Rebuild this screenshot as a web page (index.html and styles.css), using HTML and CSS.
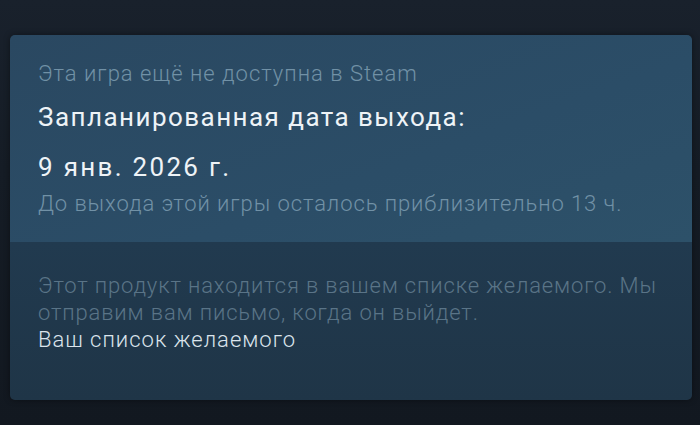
FILE: index.html
```html
<!DOCTYPE html>
<html lang="ru">
<head>
  <meta charset="UTF-8">
  <meta name="viewport" content="width=device-width, initial-scale=1.0">
  <title>Steam — дата выхода</title>
  <link rel="stylesheet" href="styles.css">
</head>
<body>

  <section class="release-card">
    <div class="release-info">
      <p class="muted">Эта игра ещё не доступна в Steam</p>
      <h2 class="release-title">Запланированная дата выхода:</h2>
      <p class="release-date">9 янв. 2026 г.</p>
      <p class="muted countdown">До выхода этой игры осталось приблизительно 13 ч.</p>
    </div>
    <div class="wishlist-info">
      <p class="dim">Этот продукт находится в вашем списке желаемого. Мы<br>отправим вам письмо, когда он выйдет.</p>
      <a class="wishlist-link" href="#">Ваш список желаемого</a>
    </div>
  </section>

</body>
</html>
```

FILE: styles.css
```css
* {
  box-sizing: border-box;
}
html, body {
  height: 100%;
}
body {
  margin: 0;
  padding: 35px 8px 25px 10px;
  background: linear-gradient(180deg, #19212c 0%, #151c25 40%, #121820 100%);
  font-family: Roboto, "Noto Sans", sans-serif;
  -webkit-font-smoothing: antialiased;
}
p, h2 {
  margin: 0;
}
.release-card {
  height: 365px;
  border-radius: 5px;
  overflow: hidden;
  display: flex;
  flex-direction: column;
  box-shadow: 0 0 6px rgba(0, 0, 0, 0.4);
}
.release-info {
  height: 207px;
  padding: 25px 20px 0 28px;
  background: linear-gradient(160deg, #2a4861 0%, #2b4d67 60%, #2d5169 100%);
}
.muted {
  color: #7191a6;
  font-size: 22px;
  font-weight: 300;
  line-height: 28px;
  letter-spacing: 1px;
}
.release-title {
  margin-top: 12px;
  color: #eef3f7;
  font-size: 26px;
  font-weight: 400;
  line-height: 34px;
  letter-spacing: 1.45px;
}
.release-date {
  margin-top: 16px;
  color: #eef3f7;
  font-size: 26px;
  line-height: 34px;
  letter-spacing: 2.3px;
}
.countdown {
  margin-top: 6px;
  letter-spacing: 0.92px;
}
.wishlist-info {
  flex: 1;
  padding: 30px 20px 0 28px;
  background: linear-gradient(180deg, #213a4f 0%, #1f3547 100%);
}
.dim {
  color: #5a7487;
  font-size: 22px;
  font-weight: 300;
  line-height: 27px;
  letter-spacing: 0.85px;
  white-space: nowrap;
}
.wishlist-link {
  display: block;
  color: #dbe4ec;
  font-size: 22px;
  font-weight: 300;
  line-height: 27px;
  letter-spacing: 1px;
  text-decoration: none;
}
```
